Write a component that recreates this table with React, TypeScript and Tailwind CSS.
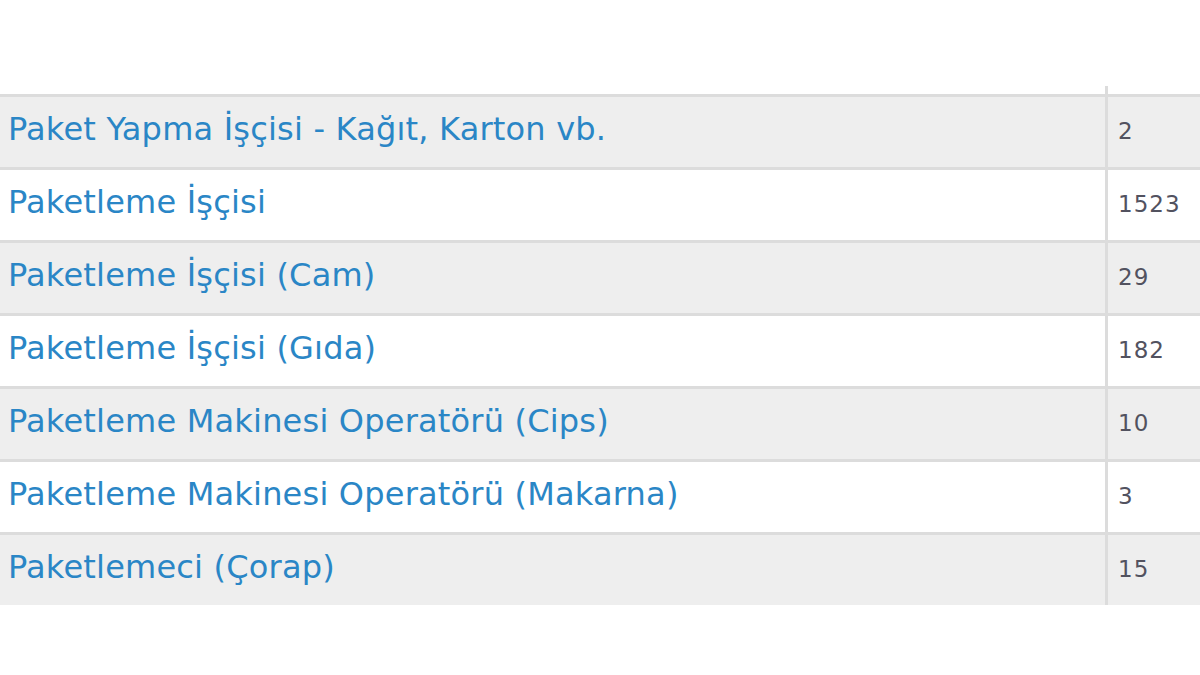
import React from "react";

const rows: [string, string][] = [
  ["Paket Yapma İşçisi - Kağıt, Karton vb.", "2"],
  ["Paketleme İşçisi", "1523"],
  ["Paketleme İşçisi (Cam)", "29"],
  ["Paketleme İşçisi (Gıda)", "182"],
  ["Paketleme Makinesi Operatörü (Cips)", "10"],
  ["Paketleme Makinesi Operatörü (Makarna)", "3"],
  ["Paketlemeci (Çorap)", "15"],
];

export default function App() {
  return (
    <div className="w-[1200px] h-[675px] bg-white overflow-hidden" style={{ fontFamily: '"DejaVu Sans", Verdana, sans-serif' }}>
      <div className="h-[86px]" />
      <div className="flex h-[8px]">
        <div className="w-[1105px]" />
        <div className="w-[3px] bg-[#dcdcdc]" />
      </div>
      <div>
        {rows.map(([name, count], i) => (
          <div
            key={i}
            className={`flex h-[73px] border-t-[3px] border-[#dcdcdc] ${i % 2 === 0 ? "bg-[#eeeeee]" : "bg-white"}`}
          >
            <div className="w-[1105px] flex items-center pl-[8px] pb-[6px] text-[32px] text-[#2a86c6] tracking-[0.2px]">
              {name}
            </div>
            <div className="w-[3px] bg-[#dcdcdc]" />
            <div className="flex-1 flex items-center pl-[10px] pb-[2px] text-[23px] tracking-[1px] text-[#52525f]">
              {count}
            </div>
          </div>
        ))}
      </div>
    </div>
  );
}
